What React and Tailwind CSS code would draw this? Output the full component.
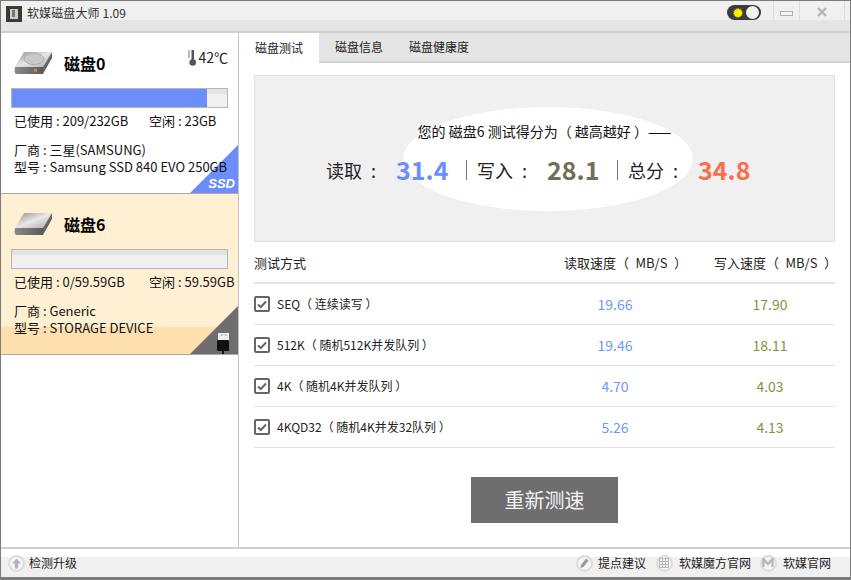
const font = { fontFamily: '"Noto Sans CJK SC","Noto Sans",sans-serif' };

function Drive({ id, flat }) {
  return (
    <svg width="40" height="24" viewBox="0 0 40 24" className="shrink-0">
      <defs>
        <linearGradient id={`top${id}`} x1="0" y1="0" x2="1" y2="1">
          <stop offset="0" stopColor="#8d8d8d" />
          <stop offset="0.5" stopColor="#e8e8e8" />
          <stop offset="1" stopColor="#a9a9a9" />
        </linearGradient>
        <linearGradient id={`front${id}`} x1="0" y1="0" x2="1" y2="0">
          <stop offset="0" stopColor="#8a8a8a" />
          <stop offset="1" stopColor="#5a5a5a" />
        </linearGradient>
      </defs>
      <path d="M10 1 L38 1 L29 16 L1 16 Z" fill={`url(#top${id})`} />
      <path d="M1 16 L29 16 L29 23 L2 23 Q0 22 1 16 Z" fill={`url(#front${id})`} />
      <path d="M29 16 L38 1 L38 7 L29 23 Z" fill="#666" />
      {!flat && <ellipse cx="20" cy="8" rx="10" ry="5.5" fill="#c9c9c9" stroke="#b0b0b0" />}
      {!flat && <rect x="20" y="18" width="3" height="2.5" fill="#d98a33" />}
    </svg>
  );
}

function Thermo() {
  return (
    <svg width="9" height="16" viewBox="0 0 9 16">
      <rect x="3.5" y="0" width="2.5" height="12" fill="#555" />
      <circle cx="4.7" cy="12.5" r="3.3" fill="#555" />
      <path d="M0 1h2M0 3h2M0 5h2M0 7h2" stroke="#777" strokeWidth="1" />
    </svg>
  );
}

function DiskCard({ id, name, bar, used, free, vendor, model, temp, active, flat }) {
  return (
    <div className={`relative h-[161px] overflow-hidden border-b border-[#a9a9a9] pl-[10px] pr-[10px] pt-[18px] text-[13px] text-[#111] ${active ? "bg-[#fff0d4]" : "bg-white"}`}>
      {active && <div className="absolute inset-x-0 bottom-0 h-[27px] bg-[#fee0ae]" />}
      {id === "a" ? (
        <div className="absolute bottom-0 right-0">
          <svg width="48" height="48" viewBox="0 0 48 48" className="block">
            <path d="M48 0V48H0Z" fill="#6b8efc" />
            <text x="45" y="43" textAnchor="end" fontSize="13" fontWeight="700" fontStyle="italic" fill="#fff" fontFamily="Liberation Sans">SSD</text>
          </svg>
        </div>
      ) : (
        <div className="absolute bottom-0 right-0">
          <svg width="48" height="48" viewBox="0 0 48 48" className="block">
            <path d="M48 0V48H0Z" fill="#6e6e6e" />
            <rect x="28" y="27" width="11" height="8" fill="#eee" />
            <path d="M31 29h1.5M35 29h1.5" stroke="#777" />
            <rect x="27" y="34" width="12" height="11" rx="1" fill="#111" />
            <rect x="32" y="45" width="2" height="3" fill="#111" />
          </svg>
        </div>
      )}
      <div className="relative flex h-[24px] items-center pl-[3px]">
        <Drive id={id} flat={flat} />
        <span className="ml-[10px] text-[16px] font-bold text-black">{name}</span>
        {temp && (
          <span className="absolute right-[0px] top-[-4px] flex items-center gap-[1px] text-[14px] text-[#222]">
            <Thermo />
            {temp}
          </span>
        )}
      </div>
      <div className="relative mt-[13px] h-[20px] border border-[#b5b5b5] bg-[linear-gradient(#e3e3e3_0,#e3e3e3_30%,#f0f0f0_30%)]">
        <div className="h-full bg-[#6b8efc]" style={{ width: bar }} />
      </div>
      <div className="relative mt-[3px] flex h-[20px] items-center pl-[3px] leading-[20px] whitespace-nowrap">
        <span className="w-[135px] shrink-0">已使用 : {used}</span>
        <span className="shrink-0">空闲 : {free}</span>
      </div>
      <div className="relative mt-[10px] pl-[3px] leading-[17px] whitespace-nowrap">
        <div>厂商 : {vendor}</div>
        <div>型号 : {model}</div>
      </div>
    </div>
  );
}

function Row({ label, r, w }) {
  return (
    <div className="flex h-[41px] items-center border-b border-[#e3e3e3] text-[12px] text-[#222]">
      <div className="flex w-[286px] shrink-0 items-center">
        <span className="flex h-[16px] w-[16px] items-center justify-center rounded-[2px] border-2 border-[#666]">
          <svg width="10" height="9" viewBox="0 0 10 9">
            <path d="M1 4.5 L3.8 7 L9 1.5" fill="none" stroke="#666" strokeWidth="2" />
          </svg>
        </span>
        <span className="ml-[7px]">{label}</span>
      </div>
      <div className="w-[150px] shrink-0 text-center text-[14px] text-[#6c9bf2]">{r}</div>
      <div className="ml-[15px] w-[130px] shrink-0 text-center text-[14px] text-[#85913f]">{w}</div>
    </div>
  );
}

function FootIcon({ children }) {
  return (
    <span className="flex h-[17px] w-[17px] shrink-0 items-center justify-center rounded-full border-2 border-[#dcdcdc] bg-[#f5f5f5]">
      {children}
    </span>
  );
}

export default function App() {
  return (
    <div style={font} className="flex h-[580px] w-[851px] flex-col overflow-hidden border-x border-t border-b-[3px] border-[#7c7c7c] bg-white">
      <div className="h-[32px] shrink-0 border-b-2 border-[#cfcfcf] bg-[linear-gradient(#f0f0f0_0,#f0f0f0_19px,#e5e5e5_19px)]">
        <div className="flex h-[26px] items-start">
          <svg width="16" height="16" viewBox="0 0 16 16" className="ml-[5px] mt-[5px]">
            <rect width="16" height="16" fill="#3a3a3a" />
            <rect x="4" y="3" width="8" height="10" fill="#cfcfc4" />
            <rect x="6" y="4" width="3" height="7" fill="#777" />
          </svg>
          <span className="ml-[5px] mt-[3px] text-[12px] leading-[18px] tracking-[0.1px] text-[#333]">软媒磁盘大师 1.09</span>
          <div className="ml-auto flex h-full items-start pr-[5px]">
            <div className="mt-[4px] flex h-[15px] w-[34px] items-center rounded-full bg-[#3c3c3c] px-[7px]">
              <span className="h-[8px] w-[8px] shrink-0 rounded-full bg-[#f6f000] outline-1 outline-dotted outline-[#c6c000]" />
              <span className="ml-[4px] h-[13px] w-[13px] shrink-0 rounded-full bg-[#f2f2f2]" />
            </div>
            <div className="ml-[12px] flex h-[19px] w-[27px] items-center justify-center border-x border-[#dcdcdc]">
              <span className="mt-[6px] h-[5px] w-[13px] border border-[#b0b0b0] bg-[#f4f4f4]" />
            </div>
            <div className="flex h-[19px] w-[45px] items-center justify-center border-r border-[#dcdcdc]">
              <svg width="12" height="10" viewBox="0 0 12 10" className="mt-[3px]">
                <path d="M2 1 L10 9 M10 1 L2 9" stroke="#b5b5b5" strokeWidth="2.4" />
              </svg>
            </div>
          </div>
        </div>
      </div>

      <div className="flex min-h-0 flex-1">
        <div className="w-[238px] shrink-0 border-r border-[#c4c4c4] bg-white">
          <DiskCard id="a" name="磁盘0" bar="90.5%" used="209/232GB" free="23GB" vendor="三星(SAMSUNG)" model="Samsung SSD 840 EVO 250GB" temp="42℃" />
          <DiskCard id="b" name="磁盘6" bar="0%" used="0/59.59GB" free="59.59GB" vendor="Generic" model="STORAGE DEVICE" active flat />
        </div>

        <div className="min-w-0 flex-1 bg-white">
          <div className="flex h-[30px] border-b-2 border-[#d4d4d4] bg-[#e5e5e5] text-[12px] text-[#222]">
            <div className="flex h-[30px] w-[80px] items-center justify-center bg-white">磁盘测试</div>
            <div className="ml-[16px] flex items-center">磁盘信息</div>
            <div className="ml-[26px] flex items-center">磁盘健康度</div>
          </div>
          <div className="px-[15px] pt-[12px]">
            <div className="relative flex h-[167px] flex-col items-center overflow-hidden border border-[#e0e0e0] bg-[#f0f0f0]">
              <div className="absolute left-[148px] top-[31px] h-[104px] w-[290px] rounded-[50%] bg-white" />
              <div className="relative mt-[45px] h-[20px] text-[14px] leading-[20px] whitespace-nowrap text-[#111]">您的 磁盘6 测试得分为（{"\u00a0"}越高越好{"\u00a0"}）——</div>
              <div className="relative ml-[5px] mt-[17px] flex h-[24px] items-center text-[18px] whitespace-nowrap text-[#222]">
                <span className="w-[70px]">读取{"\u2002"}:</span>
                <span className="w-[70px] text-[25px] font-bold text-[#6b8efc]">31.4</span>
                <span className="h-[20px] w-[1px] bg-[#777]" />
                <span className="ml-[10px] w-[70px]">写入{"\u2002"}:</span>
                <span className="w-[70px] text-[25px] font-bold text-[#6f6f55]">28.1</span>
                <span className="h-[20px] w-[1px] bg-[#777]" />
                <span className="ml-[10px] w-[70px]">总分{"\u2002"}:</span>
                <span className="w-[70px] text-[25px] font-bold text-[#fb6d4c]">34.8</span>
              </div>
            </div>

            <div className="flex h-[42px] items-center whitespace-nowrap border-b-2 border-[#e5e5e5] pt-[2px] text-[13px] text-[#222]">
              <div className="w-[286px] shrink-0">测试方式</div>
              <div className="w-[150px] shrink-0 pl-[24px]">读取速度（{"\u2002"}MB/S{"\u2002"}）</div>
              <div className="ml-[15px] w-[130px] shrink-0 pl-[9px]">写入速度（{"\u2002"}MB/S{"\u2002"}）</div>
            </div>
            <Row label={"SEQ（\u00a0连续读写\u00a0）"} r="19.66" w="17.90" />
            <Row label={"512K（\u00a0随机512K并发队列\u00a0）"} r="19.46" w="18.11" />
            <Row label={"4K（\u00a0随机4K并发队列\u00a0）"} r="4.70" w="4.03" />
            <Row label={"4KQD32（\u00a0随机4K并发32队列\u00a0）"} r="5.26" w="4.13" />
            <div className="flex justify-center pt-[29px]">
              <button className="h-[46px] w-[147px] bg-[#6e6e6e] text-[20px] text-[#f4f4f4]">重新测速</button>
            </div>
          </div>
        </div>
      </div>

      <div className="h-[30px] shrink-0 border-t-2 border-[#cfcfcf] bg-[linear-gradient(#ffffff_0,#ffffff_8px,#f0f0f0_8px)] text-[12px] text-[#222]">
        <div className="flex h-full items-center pl-[7px]">
          <FootIcon>
            <svg width="11" height="11" viewBox="0 0 11 11">
              <path d="M5.5 0.5 L10 5.5 H7.2 V10.5 H3.8 V5.5 H1 Z" fill="#b5b5b5" />
            </svg>
          </FootIcon>
          <span className="ml-[4px]">检测升级</span>
          <div className="ml-auto flex items-center pr-[19px]">
            <FootIcon>
              <svg width="10" height="11" viewBox="0 0 10 11">
                <path d="M7 0.5 L9.5 2.5 L4.5 9 L1.5 10 L2 7Z" fill="#9a9a9a" />
              </svg>
            </FootIcon>
            <span className="ml-[5px]">提点建议</span>
            <span className="ml-[10px]">
              <FootIcon>
                <svg width="10" height="10" viewBox="0 0 10 10">
                  <path d="M0.5 0.5H9.5V9.5H0.5ZM3.5 0.5V9.5M6.5 0.5V9.5M0.5 3.5H9.5M0.5 6.5H9.5" fill="none" stroke="#b5b5b5" />
                </svg>
              </FootIcon>
            </span>
            <span className="ml-[6px]">软媒魔方官网</span>
            <span className="ml-[9px]">
              <FootIcon>
                <svg width="12" height="10" viewBox="0 0 12 10">
                  <path d="M1.5 9V1L6 6L10.5 1V9" fill="none" stroke="#b5b5b5" strokeWidth="2.2" />
                </svg>
              </FootIcon>
            </span>
            <span className="ml-[6px]">软媒官网</span>
          </div>
        </div>
      </div>
    </div>
  );
}
